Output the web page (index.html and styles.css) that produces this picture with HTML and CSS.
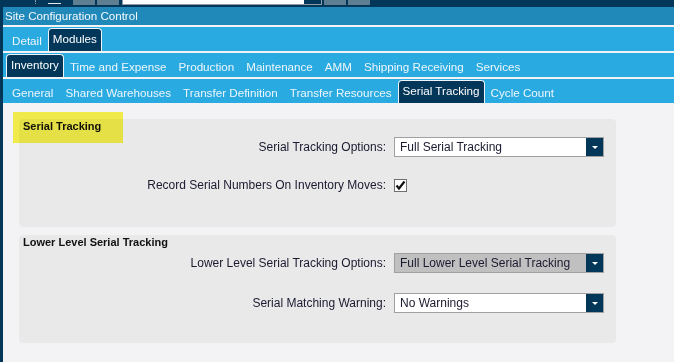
FILE: index.html
```html
<!DOCTYPE html>
<html lang="en">
<head>
    <meta charset="UTF-8">
    <title>Site Configuration Control</title>
    <link rel="stylesheet" href="styles.css">
</head>
<body>
    <div class="window">
        <div class="toolbar">
            <span class="tool-grip"></span>
            <span class="tool-lines"></span>
            <span class="tool-btn first"></span>
            <span class="tool-btn"></span>
            <span class="tool-search"><span class="tool-search-go"></span></span>
            <span class="tool-btn"></span>
            <span class="tool-btn"></span>
        </div>
        <div class="titlebar">Site Configuration Control</div>

        <div class="tabs">
            <span class="tab">Detail</span>
            <span class="tab active">Modules</span>
        </div>
        <div class="tabs">
            <span class="tab active">Inventory</span>
            <span class="tab">Time and Expense</span>
            <span class="tab">Production</span>
            <span class="tab">Maintenance</span>
            <span class="tab">AMM</span>
            <span class="tab">Shipping Receiving</span>
            <span class="tab">Services</span>
        </div>
        <div class="tabs tabs-last">
            <span class="tab">General</span>
            <span class="tab">Shared Warehouses</span>
            <span class="tab">Transfer Definition</span>
            <span class="tab">Transfer Resources</span>
            <span class="tab active">Serial Tracking</span>
            <span class="tab">Cycle Count</span>
        </div>

        <div class="content">
            <div class="highlight"></div>

            <div class="panel">
                <div class="panel-title">Serial Tracking</div>
                <div class="form">
                    <label>Serial Tracking Options:</label>
                    <div class="select">
                        <span class="select-text">Full Serial Tracking</span>
                        <span class="select-btn"></span>
                    </div>
                    <label>Record Serial Numbers On Inventory Moves:</label>
                    <div class="check-cell">
                        <span class="checkbox">
                            <svg width="11" height="11" viewBox="0 0 11 11">
                                <polyline points="1.5,5.5 4,8.5 9.5,1.5" fill="none" stroke="#111" stroke-width="2.2"/>
                            </svg>
                        </span>
                    </div>
                </div>
            </div>

            <div class="panel">
                <div class="panel-title">Lower Level Serial Tracking</div>
                <div class="form form-wide">
                    <label>Lower Level Serial Tracking Options:</label>
                    <div class="select disabled">
                        <span class="select-text">Full Lower Level Serial Tracking</span>
                        <span class="select-btn"></span>
                    </div>
                    <label>Serial Matching Warning:</label>
                    <div class="select">
                        <span class="select-text">No Warnings</span>
                        <span class="select-btn"></span>
                    </div>
                </div>
            </div>
        </div>
    </div>
</body>
</html>
```

FILE: styles.css
```css
body {
    margin: 0;
    overflow: hidden;
    font-family: 'Liberation Sans', Arial, sans-serif;
    font-size: 11.65px;
    background-color: #f3f3f5;
}

.window {
    height: 362px;
    border-left: 3px solid #02375a;
    background-color: #f3f3f5;
}

/* top toolbar strip */
.toolbar {
    height: 7px;
    background-color: #02375a;
    display: flex;
    align-items: flex-start;
}

.tool-grip {
    margin-left: 32px;
    width: 2px;
    height: 4px;
    border-left: 1px dotted #8aa3b3;
}

.tool-lines {
    margin-left: 10px;
    width: 13px;
    height: 2px;
    margin-top: 1px;
    border-bottom: 1px solid #dfe8ee;
}

.tool-btn {
    margin-left: 2px;
    width: 22px;
    height: 5px;
    background-color: #5e7e92;
}

.tool-btn.first {
    margin-left: 12px;
}

.tool-search {
    margin-left: 3px;
    width: 198px;
    height: 4px;
    background-color: #fff;
    border: 1px solid #8d9ca6;
    border-top: none;
    display: flex;
    justify-content: flex-end;
}

.tool-search-go {
    width: 17px;
    background-color: #02375a;
}

.titlebar {
    height: 18px;
    line-height: 18px;
    padding-left: 2px;
    background-color: #2089b9;
    color: #f4f9fc;
    font-size: 11.6px;
    border-bottom: 2px solid #f3f3f5;
}

/* tab rows */
.tabs {
    height: 24px;
    background-color: #29aae1;
    display: flex;
    align-items: flex-end;
    padding-left: 3px;
    border-bottom: 2px solid #f3f3f5;
}

.tabs-last {
    border-bottom: none;
}

.tab {
    height: 24px;
    box-sizing: border-box;
    padding: 7px 6px 0;
    line-height: 14px;
    color: #eef6fb;
    white-space: nowrap;
}

.tab.active {
    height: 23px;
    padding: 3px 4px 0;
    background-color: #02375a;
    color: #fff;
    border: 1px solid #eef4f8;
    border-bottom: none;
    border-radius: 4px 4px 0 0;
}

/* content */
.content {
    position: relative;
    padding: 16px 0 0 16px;
}

.highlight {
    position: absolute;
    top: 9px;
    left: 10px;
    width: 110px;
    height: 31px;
    background-color: #fcf64e;
    mix-blend-mode: multiply;
    pointer-events: none;
}

.panel {
    width: 597px;
    height: 108px;
    box-sizing: border-box;
    background-color: #e9e9e9;
    border-radius: 4px;
    margin-bottom: 8px;
}

.panel-title {
    height: 14px;
    line-height: 14px;
    padding-left: 4px;
    font-size: 11px;
    font-weight: bold;
    color: #111;
}

.form {
    margin-top: 4px;
    display: grid;
    grid-template-columns: 367px 210px;
    grid-auto-rows: 20px;
    column-gap: 8px;
    row-gap: 18px;
    color: #1a1a30;
    font-size: 12px;
}

.form-wide {
    row-gap: 20px;
}

.form label {
    text-align: right;
    line-height: 20px;
    white-space: nowrap;
}

.select {
    display: flex;
    box-sizing: border-box;
    height: 20px;
    border: 1px solid #a0a0a0;
    background-color: #fff;
}

.select.disabled {
    background-color: #c0c0c0;
}

.select-text {
    flex: 1;
    padding-left: 5px;
    line-height: 18px;
    white-space: nowrap;
}

.select-btn {
    width: 17px;
    background-color: #02375a;
    display: flex;
    justify-content: center;
    align-items: center;
}

.select-btn::after {
    content: "";
    border-left: 3px solid transparent;
    border-right: 3px solid transparent;
    border-top: 3px solid #fff;
}

.check-cell {
    display: flex;
    align-items: center;
}

.checkbox {
    width: 13px;
    height: 13px;
    box-sizing: border-box;
    border: 1px solid #707070;
    background-color: #fff;
    display: flex;
    justify-content: center;
    align-items: center;
}
```
